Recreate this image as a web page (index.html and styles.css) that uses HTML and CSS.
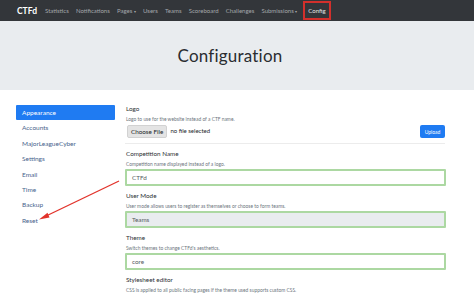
FILE: index.html
```html
<!DOCTYPE html>
<html lang="en">
<head>
  <meta charset="UTF-8" />
  <title>CTFd - Config</title>
  <link rel="stylesheet" href="styles.css">
</head>
<body>

  <nav class="navbar">
    <span class="brand">CTFd</span>
    <a class="nav-link">Statistics</a>
    <a class="nav-link">Notifications</a>
    <a class="nav-link">Pages <span class="caret">&#9662;</span></a>
    <a class="nav-link">Users</a>
    <a class="nav-link">Teams</a>
    <a class="nav-link">Scoreboard</a>
    <a class="nav-link">Challenges</a>
    <a class="nav-link">Submissions <span class="caret">&#9662;</span></a>
    <a class="nav-link marked">Config</a>
  </nav>

  <div class="jumbotron">
    <h1>Configuration</h1>
  </div>

  <div class="container">
    <ul class="side-nav">
      <li class="active">Appearance</li>
      <li>Accounts</li>
      <li>MajorLeagueCyber</li>
      <li>Settings</li>
      <li>Email</li>
      <li>Time</li>
      <li>Backup</li>
      <li>Reset</li>
    </ul>

    <div class="main">
      <div class="group">
        <label>Logo</label>
        <small>Logo to use for the website instead of a CTF name.</small>
        <div class="file-row">
          <span class="choose">Choose File</span>
          <span class="no-file">no file selected</span>
          <button class="upload">Upload</button>
        </div>
      </div>
      <hr>
      <div class="group">
        <label>Competition Name</label>
        <small>Competition name displayed instead of a logo.</small>
        <div class="input">CTFd</div>
      </div>
      <div class="group">
        <label>User Mode</label>
        <small>User mode allows users to register as themselves or choose to form teams.</small>
        <div class="input select">Teams</div>
      </div>
      <div class="group">
        <label>Theme</label>
        <small>Switch themes to change CTFd's aesthetics.</small>
        <div class="input">core</div>
      </div>
      <div class="group">
        <label>Stylesheet editor</label>
        <small>CSS is applied to all public facing pages if the theme used supports custom CSS.</small>
      </div>
    </div>
  </div>

  <svg class="arrow" width="474" height="297" viewBox="0 0 474 297">
    <line x1="119" y1="181" x2="44" y2="217" stroke="#e2332b" stroke-width="1.3"/>
    <path d="M39 219.5 L47.5 212.8 L49.5 217.5 Z" fill="#e2332b"/>
  </svg>

</body>
</html>
```

FILE: styles.css
```css
body {
  font-family: 'Lato', 'Noto Sans', sans-serif;
  color: #212529;
  margin: 0;
  background: #fff;
  position: relative;
  height: 297px;
  overflow: hidden;
}
.navbar {
  background: #33363a;
  height: 21px;
  display: flex;
  align-items: center;
  padding-left: 17px;
}
.brand {
  color: #fff;
  font-weight: 700;
  font-size: 8.5px;
  margin-right: 4.5px;
}
.nav-link {
  color: #a4a7aa;
  font-size: 6px;
  padding: 0 3.6px;
}
.caret {
  font-size: 4px;
}
.nav-link.marked {
  color: #e6e6e6;
  border: 2px solid #d2302c;
  padding: 4px 3.5px;
  margin-left: 2px;
}
.jumbotron {
  background: #e9ecef;
  height: 69px;
  display: flex;
  align-items: center;
  justify-content: center;
  padding-right: 14px;
}
h1 {
  font-weight: 400;
  font-size: 17px;
  margin: 0;
  letter-spacing: 0.2px;
  color: #2a2d31;
}
.container {
  display: flex;
  gap: 10px;
  margin-left: 16px;
  width: 430px;
  margin-top: 14px;
}
.side-nav {
  list-style: none;
  margin: 1px 0 0;
  padding: 0;
  width: 99px;
  flex-shrink: 0;
}
.side-nav li {
  height: 15.4px;
  line-height: 15.4px;
  padding-left: 6px;
  font-size: 6.5px;
  color: #48638c;
}
.side-nav li.active {
  background: #1f7bf2;
  color: #fff;
  border-radius: 1px;
}
.main {
  flex: 1;
}
.group {
  margin-bottom: 5px;
}
.group label {
  display: block;
  font-size: 6.3px;
  line-height: 10px;
  padding-left: 1px;
  color: #2b2f33;
}
.group small {
  display: block;
  font-size: 4.9px;
  line-height: 8px;
  margin-top: 1px;
  padding-left: 1px;
  color: #6c757d;
}
.file-row {
  display: flex;
  align-items: flex-start;
  margin-top: 2px;
  padding-left: 2px;
}
.choose {
  background: #e4e4e4;
  border: 0.5px solid #d2d2d2;
  border-radius: 2px;
  font-size: 6.3px;
  height: 11px;
  line-height: 11px;
  padding: 0 3px;
}
.no-file {
  font-size: 6px;
  line-height: 11px;
  margin-left: 3px;
}
.upload {
  margin-left: auto;
  margin-right: 1px;
  background: #1f7bf2;
  color: #fff;
  border: none;
  border-radius: 2px;
  font-family: inherit;
  font-size: 5px;
  height: 13px;
  width: 25px;
  padding: 0;
}
hr {
  border: none;
  border-top: 1px solid #ececec;
  margin: 2px 1px 5px 0;
}
.input {
  margin-top: 1px;
  height: 17px;
  box-sizing: border-box;
  border: 2px solid #acd8a2;
  border-radius: 1px;
  font-size: 6.3px;
  line-height: 13px;
  padding-left: 5px;
  color: #555b61;
}
.input.select {
  background: #e9ecef;
}
.arrow {
  position: absolute;
  left: 0;
  top: 0;
  pointer-events: none;
}
```
